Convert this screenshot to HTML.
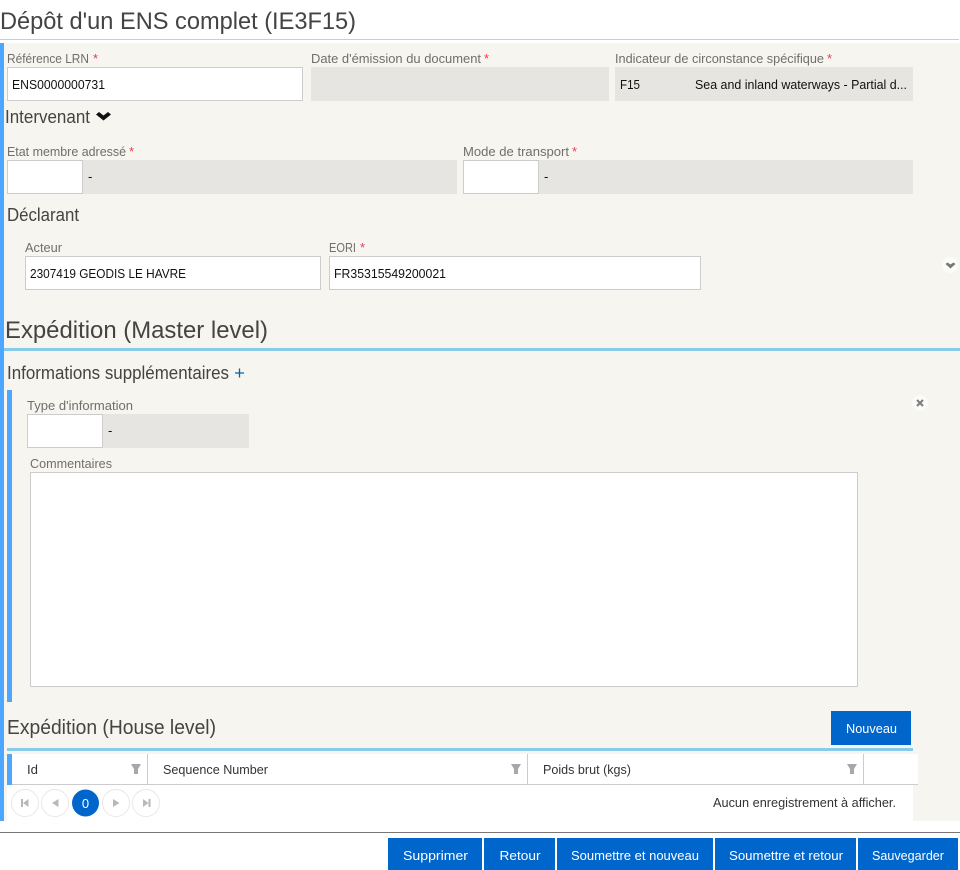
<!DOCTYPE html>
<html lang="fr">
<head>
<meta charset="utf-8">
<title>Dépôt d'un ENS complet (IE3F15)</title>
<style>
html,body{margin:0;padding:0;background:#fff;width:960px;height:870px;overflow:hidden}
svg{display:block}
text{font-family:"Liberation Sans",sans-serif;white-space:pre}
.l{font-size:13px;fill:#726e6a}
.s{font-size:13px;fill:#f0384c}
.v{font-size:13px;fill:#111}
.h{font-size:24px;fill:#444}
.m{font-size:18px;fill:#444}
.w{font-size:13px;fill:#fff}
.i{fill:#fff;stroke:#ccc;stroke-width:1}
.g{fill:#e6e5e1}
.b{fill:#0066cc}
</style>
</head>
<body>
<svg width="960" height="870" viewBox="0 0 960 870" xmlns="http://www.w3.org/2000/svg">
<rect width="960" height="870" fill="#fff"/>
<rect x="0" y="39" width="959" height="1" fill="#ccc"/>
<rect x="4" y="43" width="956" height="778" fill="#f6f5ef"/>
<rect x="0" y="43" width="4" height="778" fill="#4da6ff"/>

<text class="h" x="0" y="29" textLength="356" lengthAdjust="spacingAndGlyphs">Dépôt d'un ENS complet (IE3F15)</text>

<text class="l" x="7" y="63" textLength="82" lengthAdjust="spacingAndGlyphs">Référence LRN</text><text class="s" x="93" y="63">*</text>
<rect class="i" x="7.5" y="67.5" width="295" height="33"/>
<text class="v" x="12" y="89" textLength="93" lengthAdjust="spacingAndGlyphs">ENS0000000731</text>

<text class="l" x="311" y="63" textLength="170" lengthAdjust="spacingAndGlyphs">Date d'émission du document</text><text class="s" x="484" y="63">*</text>
<rect class="g" x="311" y="67" width="298" height="34"/>

<text class="l" x="615" y="63" textLength="209" lengthAdjust="spacingAndGlyphs">Indicateur de circonstance spécifique</text><text class="s" x="827" y="63">*</text>
<rect class="g" x="615" y="67" width="298" height="34"/>
<text class="v" x="620" y="89" textLength="20" lengthAdjust="spacingAndGlyphs">F15</text>
<text class="v" x="695" y="89" textLength="212" lengthAdjust="spacingAndGlyphs">Sea and inland waterways - Partial d...</text>

<text class="m" x="5" y="123" textLength="85" lengthAdjust="spacingAndGlyphs">Intervenant</text>
<path d="M96 114.500 L99 112 L103.500 115.500 L108 112 L111 114.500 L103.500 120.500 Z" fill="#111"/>

<text class="l" x="7" y="156" textLength="119" lengthAdjust="spacingAndGlyphs">Etat membre adressé</text><text class="s" x="129" y="156">*</text>
<rect class="g" x="83" y="160" width="374" height="34"/>
<rect class="i" x="7.500" y="160.500" width="75" height="33"/>
<text class="v" x="88" y="181">-</text>

<text class="l" x="463" y="156" textLength="106" lengthAdjust="spacingAndGlyphs">Mode de transport</text><text class="s" x="572" y="156">*</text>
<rect class="g" x="539" y="160" width="374" height="34"/>
<rect class="i" x="463.500" y="160.500" width="75" height="33"/>
<text class="v" x="544" y="181">-</text>

<text class="m" x="7" y="221" textLength="72" lengthAdjust="spacingAndGlyphs">Déclarant</text>

<text class="l" x="25" y="252" textLength="37" lengthAdjust="spacingAndGlyphs">Acteur</text>
<rect class="i" x="25.500" y="256.500" width="295" height="33"/>
<text class="v" x="30" y="278" textLength="156" lengthAdjust="spacingAndGlyphs">2307419 GEODIS LE HAVRE</text>

<text class="l" x="329" y="252" textLength="27" lengthAdjust="spacingAndGlyphs">EORI</text><text class="s" x="360" y="252">*</text>
<rect class="i" x="329.500" y="256.500" width="371" height="33"/>
<text class="v" x="334" y="278" textLength="112" lengthAdjust="spacingAndGlyphs">FR35315549200021</text>

<circle cx="950" cy="265" r="8" fill="#fbfbf8"/>
<path d="M945.500 264 L947.500 262.500 L950.500 264.500 L953.500 262.500 L955.500 264 L950.500 268.500 Z" fill="#777"/>

<text class="h" x="5" y="338" textLength="263" lengthAdjust="spacingAndGlyphs">Expédition (Master level)</text>
<rect x="4" y="348" width="956" height="3" fill="#88cbe8"/>

<text class="m" x="7" y="379" textLength="222" lengthAdjust="spacingAndGlyphs">Informations supplémentaires</text>
<path d="M235 373 H244 M239.500 368.500 V377.500" stroke="#0066aa" stroke-width="1.300" fill="none"/>

<rect x="7" y="390" width="5" height="312" fill="#4da6ff"/>
<text class="l" x="27" y="410" textLength="106" lengthAdjust="spacingAndGlyphs">Type d'information</text>
<rect class="g" x="103" y="414" width="146" height="34"/>
<rect class="i" x="27.500" y="414.500" width="75" height="33"/>
<text class="v" x="108" y="435">-</text>

<circle cx="920" cy="403" r="8" fill="#fbfbf8"/>
<path d="M917 400 L923 406 M923 400 L917 406" stroke="#7c7c7c" stroke-width="2" fill="none"/>

<text class="l" x="30" y="468" textLength="82" lengthAdjust="spacingAndGlyphs">Commentaires</text>
<rect class="i" x="30.500" y="472.500" width="827" height="214"/>

<text x="7" y="734" font-size="20" fill="#444" textLength="209" lengthAdjust="spacingAndGlyphs">Expédition (House level)</text>
<rect class="b" x="831" y="711" width="80" height="34"/>
<text class="w" x="846" y="733" textLength="51" lengthAdjust="spacingAndGlyphs">Nouveau</text>
<rect x="7" y="748" width="906" height="3" fill="#88cbe8"/>

<rect x="7" y="754" width="911" height="31" fill="#fff"/>
<rect x="7" y="785" width="906" height="36" fill="#fff"/>
<rect x="4" y="785" width="3" height="36" fill="#f6f5ef"/>
<rect x="7" y="754" width="5" height="31" fill="#4da6ff"/>
<rect x="12" y="784" width="906" height="1" fill="#ccc"/>
<rect x="147" y="754" width="1" height="30" fill="#ccc"/>
<rect x="527" y="754" width="1" height="30" fill="#ccc"/>
<rect x="863" y="754" width="1" height="30" fill="#ccc"/>
<text class="v" x="27" y="774" textLength="11" lengthAdjust="spacingAndGlyphs" style="fill:#333">Id</text>
<text class="v" x="163" y="774" textLength="105" lengthAdjust="spacingAndGlyphs" style="fill:#333">Sequence Number</text>
<text class="v" x="543" y="774" textLength="88" lengthAdjust="spacingAndGlyphs" style="fill:#333">Poids brut (kgs)</text>
<path d="M131 764 H141 L138 769 V774 H134 V769 Z" fill="#a8a8a8"/>
<path d="M511 764 H521 L518 769 V774 H514 V769 Z" fill="#a8a8a8"/>
<path d="M847 764 H857 L854 769 V774 H850 V769 Z" fill="#a8a8a8"/>

<g fill="#fff" stroke="#e8e8e8" stroke-width="1">
<circle cx="25" cy="803" r="13.500"/>
<circle cx="55" cy="803" r="13.500"/>
<circle cx="116" cy="803" r="13.500"/>
<circle cx="146" cy="803" r="13.500"/>
</g>
<circle cx="85.500" cy="803" r="13.500" fill="#0066cc"/>
<text class="w" x="85.500" y="808" text-anchor="middle">0</text>
<g fill="#b8b8b8">
<path d="M21 799 H23 V807 H21 Z M28.500 799 V807 L23 803 Z"/>
<path d="M58.500 799 V807 L52 803 Z"/>
<path d="M113 799 V807 L119.500 803 Z"/>
<path d="M143 799 V807 L148.500 803 Z M148.500 799 H150.500 V807 H148.500 Z"/>
</g>
<text class="v" x="713" y="807" textLength="183" lengthAdjust="spacingAndGlyphs" style="fill:#333">Aucun enregistrement à afficher.</text>

<rect x="0" y="832" width="960" height="1" fill="#777"/>
<rect class="b" x="388" y="838" width="94" height="32"/>
<rect class="b" x="484" y="838" width="71" height="32"/>
<rect class="b" x="557" y="838" width="156" height="32"/>
<rect class="b" x="715" y="838" width="141" height="32"/>
<rect class="b" x="858" y="838" width="100" height="32"/>
<text class="w" x="403" y="860" textLength="65" lengthAdjust="spacingAndGlyphs">Supprimer</text>
<text class="w" x="499.500" y="860" textLength="41" lengthAdjust="spacingAndGlyphs">Retour</text>
<text class="w" x="571" y="860" textLength="128" lengthAdjust="spacingAndGlyphs">Soumettre et nouveau</text>
<text class="w" x="729" y="860" textLength="114" lengthAdjust="spacingAndGlyphs">Soumettre et retour</text>
<text class="w" x="872" y="860" textLength="72" lengthAdjust="spacingAndGlyphs">Sauvegarder</text>
</svg>
</body>
</html>
